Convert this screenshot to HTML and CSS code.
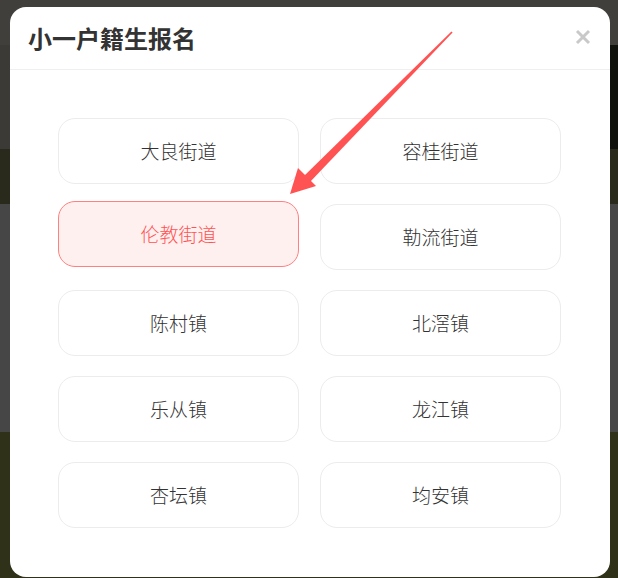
FILE: index.html
```html
<!DOCTYPE html>
<html lang="zh-CN">
<head>
<meta charset="utf-8">
<title>小一户籍生报名</title>
<link rel="stylesheet" href="styles.css">
</head>
<body>
<div class="backdrop">
  <div class="band band-top"></div>
  <div class="band band-olive"></div>
  <div class="band band-grey"></div>
  <div class="band band-field"></div>
</div>

<div class="modal">
  <div class="modal-header">
    <h1 class="modal-title">小一户籍生报名</h1>
    <button class="close-btn" aria-label="关闭">
      <svg width="16" height="16" viewBox="0 0 16 16"><path d="M2 2 L14 14 M14 2 L2 14" stroke="#c9c9c9" stroke-width="3" stroke-linecap="butt"/></svg>
    </button>
  </div>
  <div class="modal-body">
    <div class="option-grid">
      <div class="option">大良街道</div>
      <div class="option">容桂街道</div>
      <div class="option option-active">伦教街道</div>
      <div class="option">勒流街道</div>
      <div class="option">陈村镇</div>
      <div class="option">北滘镇</div>
      <div class="option">乐从镇</div>
      <div class="option">龙江镇</div>
      <div class="option">杏坛镇</div>
      <div class="option">均安镇</div>
    </div>
  </div>
</div>

<svg class="arrow" width="618" height="578" viewBox="0 0 618 578">
  <polygon points="452.6,32.6 451.4,31.4 303.5,176.5 309.5,182.5" fill="#ff5252"/>
  <polygon points="290,194 298,168 316,186" fill="#ff5252"/>
</svg>
</body>
</html>
```
FILE: styles.css
```css
* { box-sizing: border-box; }
html, body {
  margin: 0;
  padding: 0;
  width: 618px;
  height: 578px;
  overflow: hidden;
  font-family: "Noto Sans CJK SC", "Noto Sans", sans-serif;
}
body { position: relative; }

.backdrop {
  display: flex;
  flex-direction: column;
  height: 578px;
}
.band-top {
  height: 149px;
  background:
    linear-gradient(#403f3b, #403f3b) top left / 100% 45px no-repeat,
    linear-gradient(to right, #3b3a36 0, #3b3a36 604px, #0e110c 607px, #0e110c 100%);
}
.band-olive {
  height: 55px;
  background: #2a2a1c;
}
.band-grey {
  height: 228px;
  background: #464646;
}
.band-field {
  flex: 1;
  background: #2f3219;
}

.modal {
  position: absolute;
  left: 10px;
  top: 7px;
  width: 600px;
  height: 570px;
  background: #fff;
  border-radius: 16px;
  display: flex;
  flex-direction: column;
}
.modal-header {
  height: 63px;
  border-bottom: 1px solid #efefef;
  display: flex;
  align-items: center;
  justify-content: space-between;
  padding: 0 19px 0 18px;
}
.modal-title {
  margin: 0;
  font-size: 24px;
  font-weight: 700;
  color: #333;
  line-height: 1;
  padding-bottom: 1px;
}
.close-btn {
  border: 0;
  background: none;
  padding: 0;
  width: 16px;
  height: 16px;
  display: flex;
  margin-top: -2px;
}

.modal-body {
  padding: 48px 48px 0 48px;
}
.option-grid {
  display: grid;
  grid-template-columns: 241px 241px;
  column-gap: 21px;
  row-gap: 20px;
  grid-auto-rows: 66px;
}
.option {
  border: 1px solid #ececec;
  border-radius: 17px;
  display: flex;
  align-items: center;
  justify-content: center;
  font-size: 19px;
  font-weight: 300;
  color: #333;
  padding-bottom: 2px;
}
.option-active {
  background: #fff0f0;
  border-color: #ff8080;
  color: #ff5252;
  transform: translateY(-3px);
}

.arrow {
  position: absolute;
  left: 0;
  top: 0;
  pointer-events: none;
}
```
